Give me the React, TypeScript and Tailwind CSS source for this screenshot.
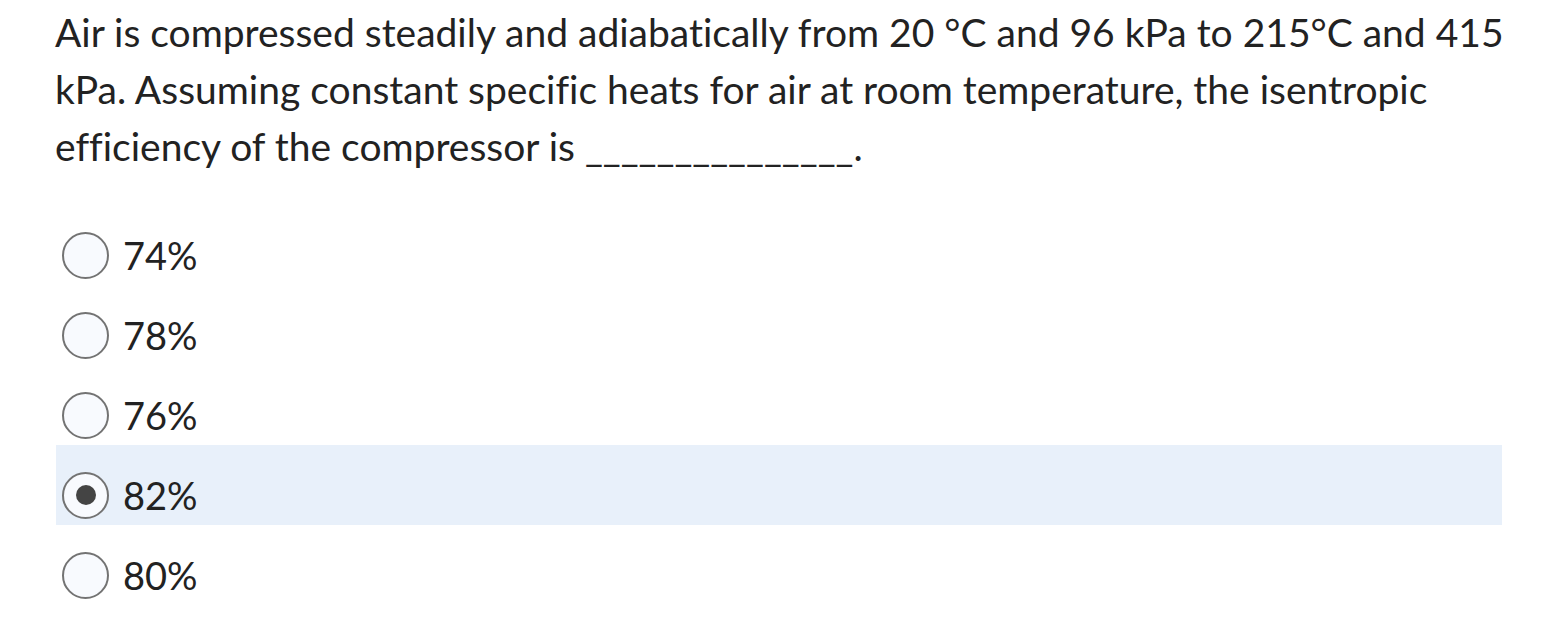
const options = [
  { id: "a", label: "74%" },
  { id: "b", label: "78%" },
  { id: "c", label: "76%" },
  { id: "d", label: "82%" },
  { id: "e", label: "80%" },
];

export default function App() {
  const selected = "d";

  return (
    <div className="min-h-screen bg-white text-[#222] font-['Lato','Liberation_Sans',sans-serif] [font-variant-ligatures:none]">
      <div className="ml-[56px] w-[1446px] pt-[4px]">
        <p className="-ml-[1px] w-[1470px] text-[39px] leading-[57px]">
          Air is compressed steadily and adiabatically from 20 °C and 96 kPa to 215°C and 415
          kPa. Assuming constant specific heats for air at room temperature, the isentropic
          efficiency of the compressor is _______________.
        </p>

        {/* answer choices */}
        <div className="mt-[30px]">
          {options.map((opt) => {
            const isSel = opt.id === selected;
            return (
              <label
                key={opt.id}
                className={`flex h-[80px] items-center pt-[20px] pl-[6px] ${
                  isSel ? "bg-[#e8f0fa]" : ""
                }`}
              >
                <span className="flex h-[47px] w-[47px] shrink-0 items-center justify-center rounded-full border-2 border-[#737373] bg-[#f8fafe]">
                  {isSel && <span className="h-[20px] w-[20px] rounded-full bg-[#444]" />}
                </span>
                <span className="ml-[14px] text-[38px] leading-none">{opt.label}</span>
              </label>
            );
          })}
        </div>
      </div>
    </div>
  );
}
